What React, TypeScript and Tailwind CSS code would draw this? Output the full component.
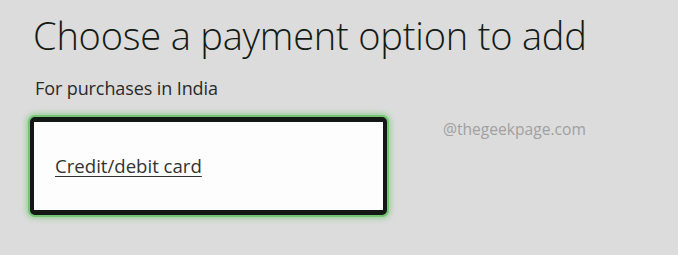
const App = () => {
  return (
    <div className="w-[678px] h-[255px] overflow-hidden bg-[#dcdcdc] pl-[33px] pt-[12px] font-['Open_Sans',sans-serif]">
      <h1 className="text-[38px] leading-[46px] font-light text-[#141a14] tracking-[-0.2px]">
        Choose a payment option to add
      </h1>
      <p className="mt-[19px] ml-[2px] text-[18px] leading-[22px] text-[#2a2a2a] tracking-[-0.1px]">For purchases in India</p>
      <div className="mt-[18px] flex items-start">
        <button className="-ml-[3px] w-[357px] h-[98px] flex items-center rounded-[5px] border-x-4 border-y-[5px] border-[#141814] bg-[#fdfdfd] pl-[21px] text-left shadow-[0_0_0_2px_#74c474,0_0_5px_4px_rgba(100,195,100,0.5)]">
          <span className="text-[18.6px] text-[#333] underline underline-offset-[3px] decoration-[1px]">
            Credit/debit card
          </span>
        </button>
        <span className="ml-[56px] mt-[1px] text-[15.6px] text-[#a0a0a0]">@thegeekpage.com</span>
      </div>
    </div>
  );
};

export default App;
